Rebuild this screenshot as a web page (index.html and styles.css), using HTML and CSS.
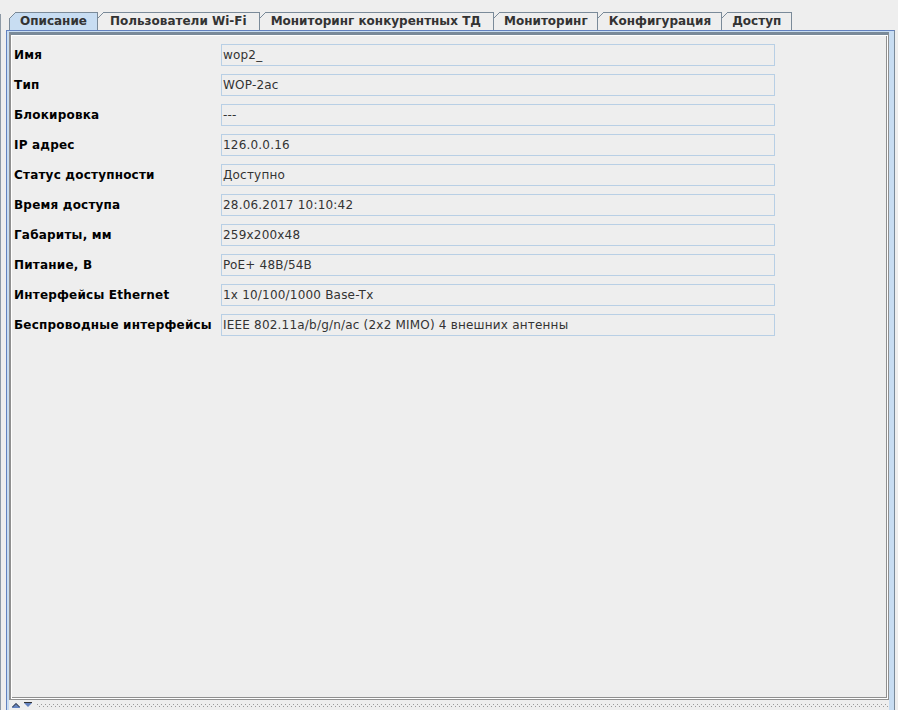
FILE: index.html
```html
<!DOCTYPE html>
<html lang="ru">
<head>
<meta charset="utf-8">
<title>Описание</title>
<link rel="stylesheet" href="styles.css">
</head>
<body>
<div class="frame">
  <div class="edge"></div>
  <div class="main">
    <div class="tabs">
      <div class="tab selected">Описание</div>
      <div class="tab">Пользователи Wi-Fi</div>
      <div class="tab">Мониторинг конкурентных ТД</div>
      <div class="tab">Мониторинг</div>
      <div class="tab">Конфигурация</div>
      <div class="tab">Доступ</div>
    </div>
    <div class="content">
      <div class="panel">
        <div class="form">
          <div class="label">Имя</div><div class="field">wop2_</div>
          <div class="label">Тип</div><div class="field">WOP-2ac</div>
          <div class="label">Блокировка</div><div class="field">---</div>
          <div class="label">IP адрес</div><div class="field">126.0.0.16</div>
          <div class="label">Статус доступности</div><div class="field">Доступно</div>
          <div class="label">Время доступа</div><div class="field">28.06.2017 10:10:42</div>
          <div class="label">Габариты, мм</div><div class="field">259x200x48</div>
          <div class="label">Питание, В</div><div class="field">PoE+ 48В/54В</div>
          <div class="label">Интерфейсы Ethernet</div><div class="field">1x 10/100/1000 Base-Tx</div>
          <div class="label">Беспроводные интерфейсы</div><div class="field">IEEE 802.11a/b/g/n/ac (2x2 MIMO) 4 внешних антенны</div>
        </div>
      </div>
      <div class="divider">
        <svg class="arrow" width="8" height="6" viewBox="0 0 8 6"><polygon points="0,5 4,1 8,5" fill="#6382bf"/><polyline points="0.5,5 4,1.5 7.5,5" fill="none" stroke="#333" stroke-width="1"/><rect x="0" y="5" width="8" height="1" fill="#6382bf"/></svg>
        <svg class="arrow" width="8" height="6" viewBox="0 0 8 6"><rect x="0" y="0" width="8" height="1" fill="#333"/><polygon points="0,1 8,1 4,5" fill="#6382bf"/></svg>
        <div class="dots"></div>
      </div>
    </div>
  </div>
</div>
</body>
</html>
```
FILE: styles.css
```css
html, body {
  margin: 0;
  padding: 0;
  background: #eeeeee;
}

body {
  font-family: "DejaVu Sans", "Liberation Sans", sans-serif;
  font-size: 12px;
  color: #333333;
}

.frame {
  display: flex;
  height: 710px;
  padding-top: 12px;
  box-sizing: border-box;
  overflow: hidden;
}

.edge {
  width: 1px;
  margin-top: 2px;
  background: #8e9aa6;
}

.main {
  margin-left: 5px;
  width: 889px;
  display: flex;
  flex-direction: column;
}

.tabs {
  display: flex;
  height: 18px;
  padding-left: 3px;
}

.tab {
  position: relative;
  height: 18px;
  box-sizing: border-box;
  border: 1px solid #7a8a99;
  border-bottom: none;
  margin-left: -1px;
  padding: 0 11px 0 11px;
  font-weight: bold;
  line-height: 17px;
  color: #333333;
  white-space: nowrap;
  background: #eeeeee;
}

.tab:first-child { margin-left: 0; z-index: 6; padding: 0 10px 0 10px; }
.tab:nth-child(2) { z-index: 5; padding: 0 12px 0 12px; }
.tab:nth-child(3) { z-index: 4; padding: 0 12px 0 11px; }
.tab:nth-child(4) { z-index: 3; padding: 0 9px 0 10px; }
.tab:nth-child(5) { z-index: 2; padding: 0 10px 0 11px; }
.tab:nth-child(6) { z-index: 1; padding: 0 10px 0 10px; }

.tab::before {
  content: "";
  position: absolute;
  left: -1px;
  top: -1px;
  width: 7px;
  height: 7px;
  background: linear-gradient(to bottom right, #eeeeee 0, #eeeeee calc(50% - 0.7px), #7a8a99 calc(50% - 0.7px), #7a8a99 calc(50% + 0.7px), transparent calc(50% + 0.7px));
}

.tab.selected {
  background: #c8ddf2;
}

.content {
  height: 680px;
  box-sizing: border-box;
  border-top: 1px solid #6382bf;
  border-left: 1px solid #6382bf;
  border-right: 1px solid #7a8a99;
  background: #c8ddf2;
  padding: 1px 5px 0 2px;
  display: flex;
  flex-direction: column;
}

.panel {
  height: 668px;
  box-sizing: border-box;
  background: #eeeeee;
  border-top: 3px solid #7a8a99;
  border-left: 2px solid #8f8f8f;
  border-right: 1px solid #8f8f8f;
  border-bottom: 1px solid #8f8f8f;
  box-shadow: inset 1px 1px 0 #ffffff, inset -1px -1px 0 #ffffff, inset -2px -2px 0 #8f8f8f;
}

.form {
  display: grid;
  grid-template-columns: 207px 554px;
  row-gap: 8px;
  padding: 9px 0 0 3px;
}

.label {
  align-self: center;
  font-weight: bold;
  color: #000000;
  white-space: nowrap;
  letter-spacing: 0.2px;
}

.field {
  height: 22px;
  box-sizing: border-box;
  border: 1px solid #b8cfe5;
  padding-left: 1px;
  line-height: 20px;
  color: #333333;
  white-space: nowrap;
  letter-spacing: 0.2px;
}

.divider {
  height: 10px;
  background: #eeeeee;
  display: flex;
  align-items: flex-start;
  padding-left: 3px;
  padding-top: 2px;
  box-sizing: border-box;
  gap: 4px;
}

.arrow {
  display: block;
}

.dots {
  flex: 1;
  height: 6px;
  margin-left: 1px;
  background:
    linear-gradient(90deg, #9a9a9a 1px, transparent 1px) 0 2px / 4px 1px repeat-x,
    linear-gradient(90deg, #9a9a9a 1px, transparent 1px) 2px 4px / 4px 1px repeat-x;
}
```
